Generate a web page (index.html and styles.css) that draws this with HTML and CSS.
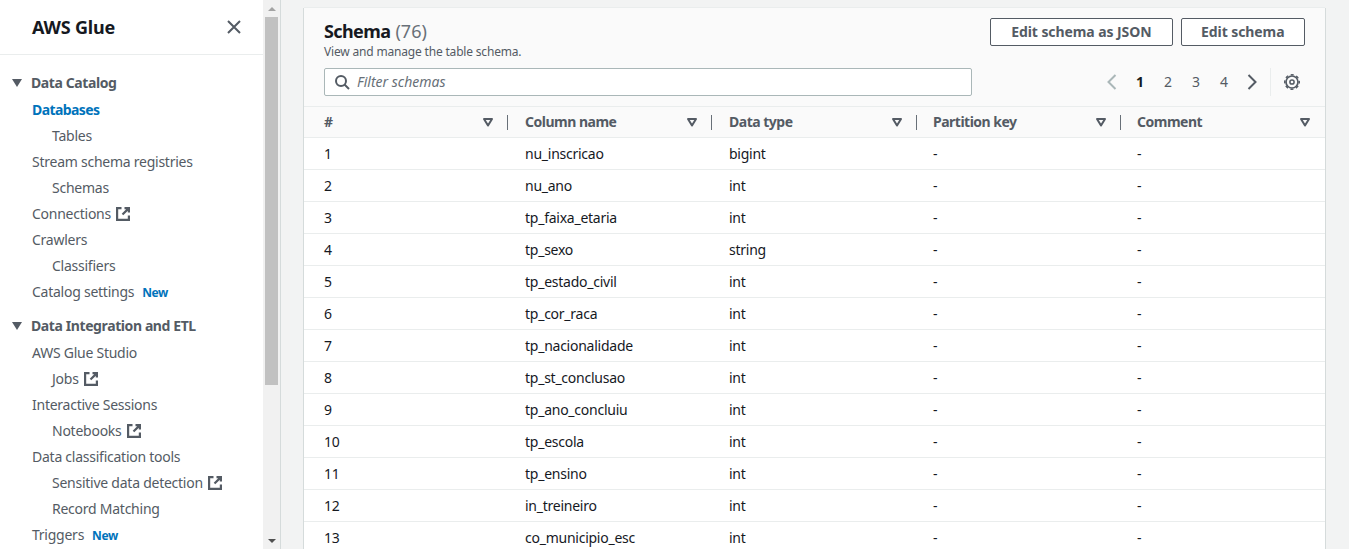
FILE: index.html
```html
<!DOCTYPE html>
<html>
	<head>
		<meta charset="UTF-8">
		<title>AWS Glue</title>
		<link rel="stylesheet" href="styles.css">
	</head>
	<body>
		<svg class="defs" width="0" height="0">
			<symbol id="ext" viewBox="0 0 16 16">
				<path d="M6.500 2.100H2.100v11.800h11.800V9.500M9.500 2.100h4.400v4.400M13.900 2.100L7.500 8.500" fill="none" stroke="currentColor" stroke-width="2.200"/>
			</symbol>
			<symbol id="sort" viewBox="0 0 12 12">
				<path d="M2 3h8L6 9.500z" fill="none" stroke="currentColor" stroke-width="2" stroke-linejoin="round"/>
			</symbol>
		</svg>
		<div class="app">
			<nav class="side">
				<div class="side-head">
					<span class="brand">AWS Glue</span>
					<svg class="close" width="16" height="16" viewBox="0 0 16 16"><path d="M2 2l12 12M14 2L2 14" fill="none" stroke="currentColor" stroke-width="2"/></svg>
				</div>
				<div class="sec"><i class="caret"></i>Data Catalog</div>
				<a class="item active">Databases</a>
				<a class="item sub">Tables</a>
				<a class="item">Stream schema registries</a>
				<a class="item sub">Schemas</a>
				<a class="item">Connections<svg class="ext"><use href="#ext"/></svg></a>
				<a class="item">Crawlers</a>
				<a class="item sub">Classifiers</a>
				<a class="item">Catalog settings<span class="new">New</span></a>
				<div class="sec sec2"><i class="caret"></i>Data Integration and ETL</div>
				<a class="item">AWS Glue Studio</a>
				<a class="item sub">Jobs<svg class="ext"><use href="#ext"/></svg></a>
				<a class="item">Interactive Sessions</a>
				<a class="item sub">Notebooks<svg class="ext"><use href="#ext"/></svg></a>
				<a class="item">Data classification tools</a>
				<a class="item sub">Sensitive data detection<svg class="ext"><use href="#ext"/></svg></a>
				<a class="item sub">Record Matching</a>
				<a class="item">Triggers<span class="new">New</span></a>
			</nav>
			<div class="bar">
				<div class="bar-btn"><i class="up"></i></div>
				<div class="track"><div class="thumb"></div></div>
				<div class="bar-btn"><i class="down"></i></div>
			</div>
			<main class="main">
				<section class="card">
					<header class="card-head">
						<div class="title-row">
							<div>
								<h2>Schema <span class="count">(76)</span></h2>
								<p class="desc">View and manage the table schema.</p>
							</div>
							<div class="actions">
								<button class="btn">Edit schema as JSON</button>
								<button class="btn">Edit schema</button>
							</div>
						</div>
						<div class="tools">
							<div class="filter">
								<svg width="16" height="16" viewBox="0 0 16 16"><circle cx="7" cy="7" r="5" fill="none" stroke="currentColor" stroke-width="2"/><path d="M10.500 10.500L15 15" fill="none" stroke="currentColor" stroke-width="2"/></svg>
								<span>Filter schemas</span>
							</div>
							<div class="pager">
								<svg class="chev off" width="16" height="16" viewBox="0 0 16 16"><path d="M11.500 1L4.500 8l7 7" fill="none" stroke="currentColor" stroke-width="2"/></svg>
								<span class="pg cur">1</span><span class="pg">2</span><span class="pg">3</span><span class="pg">4</span>
								<svg class="chev" width="16" height="16" viewBox="0 0 16 16"><path d="M4.500 1l7 7-7 7" fill="none" stroke="currentColor" stroke-width="2"/></svg>
								<span class="sep"></span>
								<svg class="gear" width="18" height="18" viewBox="0 0 18 18"><g fill="none" stroke="currentColor"><circle cx="9" cy="9" r="6" stroke-width="1.700"/><circle cx="9" cy="9" r="7.300" stroke-width="1.400" stroke-dasharray="3.100 2.630" stroke-dashoffset="1.550"/><circle cx="9" cy="9" r="2.100" stroke-width="1.500"/></g></svg>
							</div>
						</div>
					</header>
					<div class="row thead">
						<div class="th">#<svg class="sort"><use href="#sort"/></svg></div>
						<div class="th">Column name<svg class="sort"><use href="#sort"/></svg></div>
						<div class="th">Data type<svg class="sort"><use href="#sort"/></svg></div>
						<div class="th">Partition key<svg class="sort"><use href="#sort"/></svg></div>
						<div class="th last">Comment<svg class="sort"><use href="#sort"/></svg></div>
					</div>
					<div id="rows"></div>
				</section>
			</main>
		</div>
		<script src="table.js"></script>
	</body>
</html>
```

FILE: styles.css
```css
*{margin: 0;padding: 0;box-sizing: border-box;}
html,body{height: 100%;overflow: hidden;}
body{font: 14px/20px "Noto Sans","Open Sans",sans-serif;letter-spacing: -0.25px;color: #16191f;background: #f2f3f3;}
.defs{position: absolute;}
.app{display: flex;height: 549px;}

.side{width: 263px;flex: none;background: #fff;color: #545b64;overflow: hidden;}
.side-head{height: 55px;padding: 0 21px 0 32px;border-bottom: 1px solid #eaeded;display: flex;align-items: center;justify-content: space-between;}
.brand{font-size: 18px;font-weight: 700;letter-spacing: -0.2px;color: #16191f;}
.close{color: #545b64;}
.sec{height: 27px;margin-top: 15px;padding: 0 0 1px 12px;display: flex;align-items: center;font-weight: 700;letter-spacing: -0.4px;}
.sec2{margin-top: 7px;height: 28px;}
.caret{width: 0;height: 0;margin-right: 9px;border: 5.500px solid transparent;border-top: 8px solid #545b64;border-bottom: 0;}
.item{height: 26px;padding-left: 32px;display: flex;align-items: center;}
.item.sub{padding-left: 52px;}
.item.active{color: #0073bb;font-weight: 700;letter-spacing: -0.6px;}
.ext{width: 16px;height: 16px;margin-left: 4px;color: #545b64;}
.new{margin: 2px 0 0 8px;font-size: 12px;font-weight: 700;letter-spacing: -0.4px;color: #0073bb;}

.bar{width: 17px;flex: none;background: #f1f1f1;display: flex;flex-direction: column;}
.bar-btn{height: 17px;display: flex;align-items: center;justify-content: center;}
.up,.down{width: 0;height: 0;border: 4px solid transparent;}
.up{border-bottom-color: #a3a3a3;border-top: 0;}
.down{border-top-color: #505050;border-bottom: 0;}
.track{flex: 1;}
.thumb{height: 368px;margin: 0 2px;background: #c1c1c1;}

.main{flex: 1;min-width: 0;padding: 8px 24px 0 23px;border-left: 1px solid #d5dbdb;}
.card{background: #fff;box-shadow: 1px 0 0 #d5dbdb,-1px 0 0 #d5dbdb,0 -1px 0 #eaeded;}
.card-head{height: 98px;padding: 10px 20px 0;background: #fafafa;}
.title-row{display: flex;justify-content: space-between;}
h2{font-size: 18px;line-height: 26px;font-weight: 700;letter-spacing: -0.6px;}
.count{margin-left: 1px;font-weight: 400;letter-spacing: 0;color: #687078;}
.desc{font-size: 12px;line-height: 16px;letter-spacing: -0.18px;color: #545b64;}
.actions{display: flex;gap: 8px;}
.btn{height: 28px;padding: 0 20px;font: 700 14px/20px "Noto Sans","Open Sans",sans-serif;letter-spacing: -0.08px;color: #545b64;background: #fff;border: 1px solid #545b64;border-radius: 2px;}
.btn + .btn{padding: 0 19.5px;}
.tools{margin-top: 8px;display: flex;align-items: center;justify-content: space-between;}
.filter{width: 648px;height: 28px;padding-left: 9px;display: flex;align-items: center;gap: 7px;background: #fff;border: 1px solid #aab7b8;border-radius: 2px;color: #545b64;}
.filter span{font-style: italic;letter-spacing: 0;color: #687078;}
.pager{display: flex;align-items: center;color: #545b64;}
.pg{width: 28px;text-align: center;}
.pg.cur{font-weight: 700;color: #16191f;}
.chev{margin: 0 6px;}
.chev.off{color: #aab7b8;}
.sep{width: 1px;height: 28px;margin: 0 12px 0 4px;background: #eaeded;}
.gear{margin-right: 4px;}

.row{display: grid;grid-template-columns: 204px 204px 204px 204px 205px;}
.thead{height: 32px;background: #fafafa;border-top: 1px solid #eaeded;border-bottom: 1px solid #eaeded;font-weight: 700;letter-spacing: -0.5px;color: #545b64;}
.th{position: relative;display: flex;align-items: center;justify-content: space-between;padding: 0 14px 0 17px;}
.th:first-child{padding-left: 20px;}
.th:nth-child(3),.th:nth-child(4){padding-right: 13px;}
.th::after{content: "";position: absolute;right: 0;top: 8px;height: 15px;width: 1px;background: #687078;}
.th:nth-child(3)::after,.th:nth-child(4)::after{right: -1px;}
.th.last::after{display: none;}
.sort{width: 12px;height: 12px;color: #545b64;}
.cell{height: 32px;padding: 0 17px;display: flex;align-items: center;border-bottom: 1px solid #eaeded;}
.cell:first-child{padding-left: 20px;}
```

FILE: table.js
```js
var data = [
	["nu_inscricao", "bigint"],
	["nu_ano", "int"],
	["tp_faixa_etaria", "int"],
	["tp_sexo", "string"],
	["tp_estado_civil", "int"],
	["tp_cor_raca", "int"],
	["tp_nacionalidade", "int"],
	["tp_st_conclusao", "int"],
	["tp_ano_concluiu", "int"],
	["tp_escola", "int"],
	["tp_ensino", "int"],
	["in_treineiro", "int"],
	["co_municipio_esc", "int"]
];
var html = "";
data.forEach(function(d, i){
	html += '<div class="row">';
	[i + 1, d[0], d[1], "-", "-"].forEach(function(v){
		html += '<div class="cell">' + v + '</div>';
	});
	html += '</div>';
});
document.getElementById("rows").innerHTML = html;
```
